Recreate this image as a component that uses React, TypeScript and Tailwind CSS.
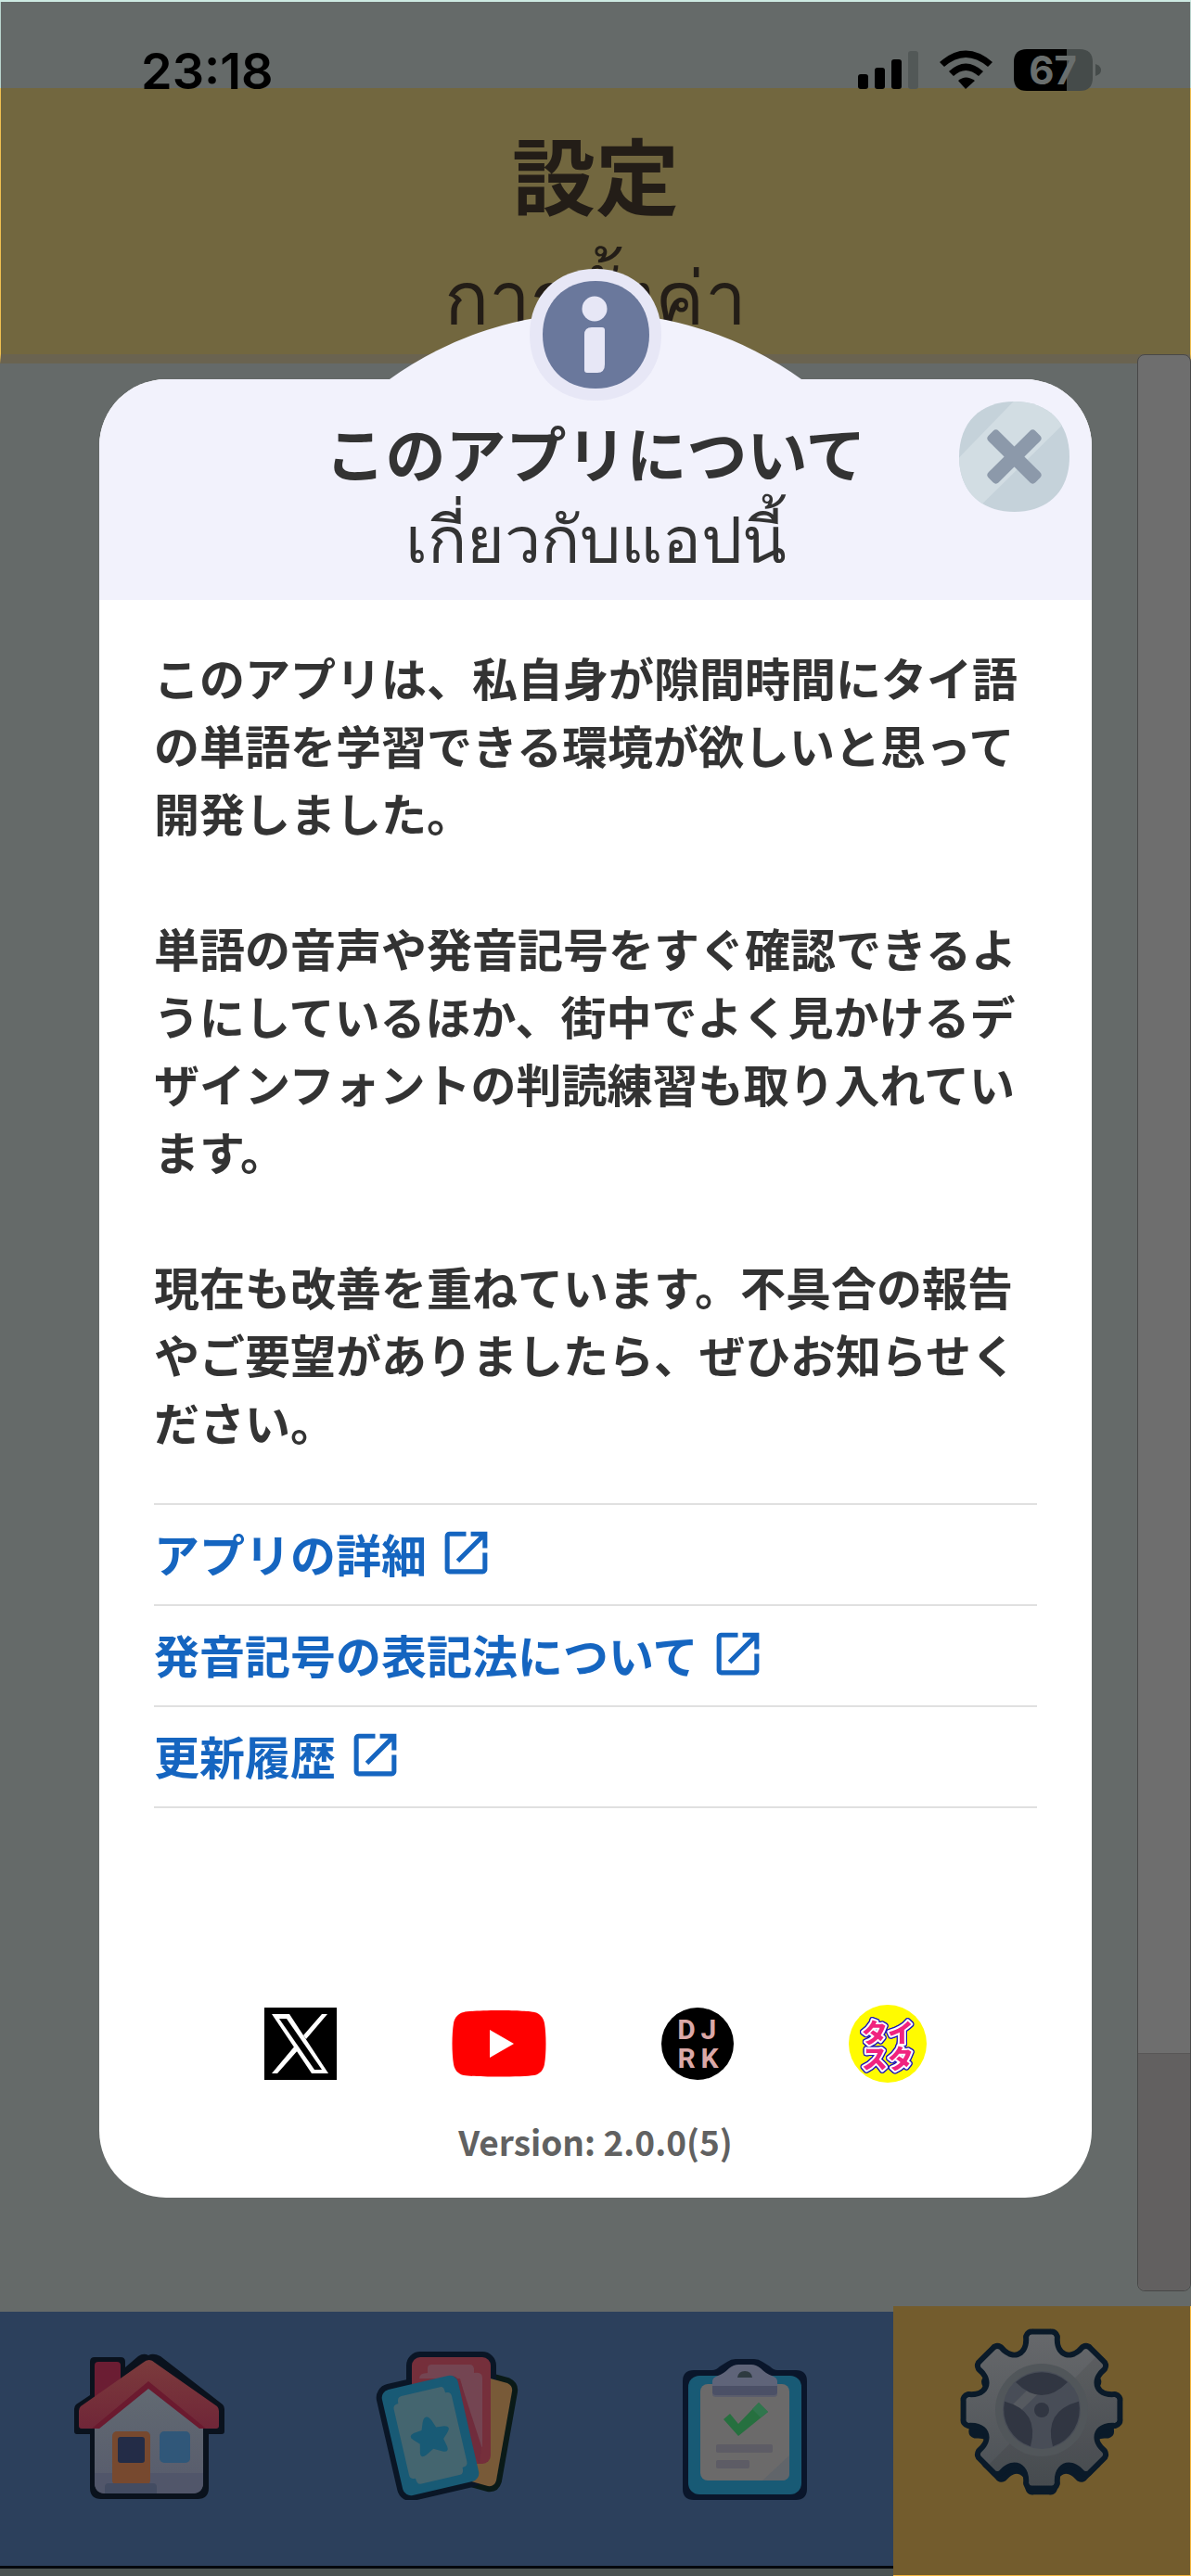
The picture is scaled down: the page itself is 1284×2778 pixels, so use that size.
import * as React from 'react';
import { MdOpenInNew } from 'react-icons/md';

const paragraphs = [
  'このアプリは、私自身が隙間時間にタイ語の単語を学習できる環境が欲しいと思って開発しました。',
  '単語の音声や発音記号をすぐ確認できるようにしているほか、街中でよく見かけるデザインフォントの判読練習も取り入れています。',
  '現在も改善を重ねています。不具合の報告やご要望がありましたら、ぜひお知らせください。',
];

const links = ['アプリの詳細', '発音記号の表記法について', '更新履歴'];

function StatusIcons() {
  return (
    <svg width="262" height="45" viewBox="0 0 262 45" aria-hidden="true" className="overflow-visible">
      <rect x="0" y="27" width="11" height="16" rx="3" />
      <rect x="18" y="20" width="11" height="23" rx="3" />
      <rect x="36" y="11" width="11" height="32" rx="3" />
      <rect x="54" y="2" width="11" height="41" rx="3" fill="#525857" />
      <path d="M88 14Q116 -11 145 14L140 19Q116 -1 93 19Z" />
      <path d="M98 24Q116 7 135 24L130 29Q116 17 103 29Z" />
      <path d="M108 34Q116 27 126 34L116 43Z" />
      <path d="M182 0H225V45H182Q168 45 168 31V14Q168 0 182 0Z" />
      <path d="M225 0H239Q253 0 253 14V31Q253 45 239 45H225Z" fill="#454b4a" />
      <path d="M256 16Q262 18 262 22.500T256 29Z" fill="#454b4a" />
      <text x="210" y="38" textAnchor="middle" fill="#696e6d" className="font-['Inter',sans-serif] text-[42px] font-bold">
        67
      </text>
    </svg>
  );
}

function InfoBadge() {
  return (
    <svg width="142" height="142" viewBox="0 0 142 142" aria-hidden="true">
      <path d="M71 0C113 0 142 29 142 71S113 142 71 142 0 113 0 71 29 0 71 0Z" fill="#e7e7f6" />
      <path d="M71 13C105 13 129 37 129 71S105 129 71 129 14 105 14 71 37 13 71 13Z" fill="#6a789c" />
      <circle cx="70" cy="43" r="13.500" fill="#e7e7f6" />
      <path d="M67 63H78Q81 63 81 66V103Q81 112 73 112H62Q59 112 59 109V71Q59 63 67 63Z" fill="#e7e7f6" />
    </svg>
  );
}

function CloseIcon() {
  return (
    <svg width="119" height="119" viewBox="0 0 120 120" aria-hidden="true">
      <clipPath id="close-shape">
        <path d="M60 0C97 0 120 23 120 60S97 120 60 120 0 97 0 60 23 0 60 0Z" />
      </clipPath>
      <g clipPath="url(#close-shape)">
        <path d="M0 0H120V120H0Z" fill="#c5d2da" />
        <path d="M61 -2L-2 63V138L120 18V-2Z" fill="#d2dde3" />
      </g>
      <path d="M60 49L77 32Q80 29 83 32L88 37Q91 40 88 43L71 60L88 77Q91 80 88 83L83 88Q80 91 77 88L60 71L43 88Q40 91 37 88L32 83Q29 80 32 77L49 60L32 43Q29 40 32 37L37 32Q40 29 43 32Z" fill="#8c99aa" />
    </svg>
  );
}

function XLogo() {
  return (
    <svg width="78" height="78" viewBox="0 0 78 78" aria-hidden="true">
      <path d="M0 0H78V78H0Z" />
      <path d="M8 7H27L69 71H51Z" fill="#fff" />
      <path d="M16 12H24L62 67H54Z" />
      <path d="M62 7H68L45 34L42 30ZM8 71H14L37 45L34 40Z" fill="#fff" />
    </svg>
  );
}

function YouTubeLogo() {
  return (
    <svg width="102" height="72" viewBox="0 0 102 72" aria-hidden="true">
      <path d="M51 0C70 0 86 1 89 2 95 3 99 8 100 14 102 26 102 46 100 58 99 64 95 69 89 70 76 72 26 72 13 70 7 69 3 64 2 58 0 46 0 26 2 14 3 8 7 3 13 2 16 1 32 0 51 0Z" fill="#f00" />
      <path d="M41 21L67 36L41 51Z" fill="#fff" />
    </svg>
  );
}

function DjrkLogo() {
  return (
    <svg width="78" height="78" viewBox="0 0 78 78" aria-hidden="true">
      <circle cx="39" cy="39" r="39" />
      <g fill="#dba8a7" textAnchor="middle" className="font-['Roboto',sans-serif] text-[30px] font-bold">
        <text x="27" y="34">D</text>
        <text x="51" y="34">J</text>
        <text x="27" y="65">R</text>
        <text x="52" y="65">K</text>
      </g>
    </svg>
  );
}

function TaistaLogo() {
  return (
    <svg width="84" height="84" viewBox="0 0 84 84" aria-hidden="true">
      <circle cx="42" cy="42" r="42" fill="#fffb00" />
      <g
        fill="#f0237f"
        stroke="#fff"
        strokeWidth="4"
        strokeLinejoin="round"
        textAnchor="middle"
        className="font-['Noto_Sans_CJK_JP',sans-serif] text-[28px] font-black [filter:drop-shadow(1px_0_0_#1a12b8)_drop-shadow(-1px_0_0_#1a12b8)_drop-shadow(0_1px_0_#1a12b8)_drop-shadow(0_-1px_0_#1a12b8)] [paint-order:stroke]"
      >
        <text x="42" y="41">タイ</text>
        <text x="42" y="69">スタ</text>
      </g>
    </svg>
  );
}

function HomeIcon() {
  return (
    <svg width="164" height="158" viewBox="0 0 164 158" aria-hidden="true">
      <defs>
        <linearGradient id="home-roof" x1="0" y1="0" x2="0" y2="1">
          <stop offset="0" stopColor="#7b3b3c" />
          <stop offset="1" stopColor="#702638" />
        </linearGradient>
        <linearGradient id="home-wall" x1="0" y1="0" x2="0" y2="1">
          <stop offset="0" stopColor="#626a72" />
          <stop offset="1" stopColor="#575b6c" />
        </linearGradient>
      </defs>
      <path d="M18 45V9Q18 4 23 4H51Q56 4 56 9V15L70 3Q76 -1 81 2Q86 -1 94 3L161 55Q163 57 163 60V84Q163 87 160 87H146V145Q146 157 134 157H30Q18 157 18 145V87H4Q1 87 1 84V60Q1 57 3 55Z" fill="#0a121d" />
      <path d="M23 60V13Q23 9 27 9H47Q51 9 51 13V60Z" fill="#6b1d33" />
      <path d="M23 78L81 34L140 78V139Q140 151 128 151H35Q23 151 23 139Z" fill="url(#home-wall)" />
      <path d="M23 129H140V139Q140 151 128 151H35Q23 151 23 139Z" fill="#51566a" />
      <path d="M75 10Q82 4 88 10L155 57Q157 59 157 62V78Q157 81 154 81H140L81 36L24 81H9Q6 81 6 78V62Q6 59 8 57Z" fill="url(#home-roof)" />
      <path d="M81 30L143 81H136L81 38L28 81H20Z" fill="#6b1a2f" />
      <rect x="42" y="84" width="41" height="58" rx="5" fill="#77492f" />
      <rect x="48" y="90" width="29" height="28" rx="3" fill="#232c47" />
      <rect x="93" y="84" width="33" height="34" rx="5" fill="#305779" />
      <path d="M34 151V144Q34 140 38 140H86Q90 140 90 144V151Z" fill="#434c62" />
    </svg>
  );
}

function CardsIcon() {
  return (
    <svg width="156" height="161" viewBox="0 0 156 161" aria-hidden="true">
      <g fill="#0a1626" stroke="#0a1626" strokeWidth="12" strokeLinejoin="round">
        <path d="M110 26L143 35Q149 38 148 44L131 140Q129 147 122 146L90 137Z" stroke="#0a1a18" />
        <rect x="40" y="7" width="85" height="115" rx="9" />
        <rect x="18" y="33" width="84" height="117" rx="9" transform="rotate(-13 60 91.500)" />
      </g>
      <path d="M110 26L143 35Q149 38 148 44L131 140Q129 147 122 146L90 137Z" fill="#785a38" />
      <rect x="40" y="7" width="85" height="115" rx="9" fill="#752f3b" />
      <path d="M61 15H103Q106 15 107 19V24Q116 23 116 29V104L110 100L92 30H48Q48 24 57 24V19Q57 15 61 15Z" fill="#744552" />
      <path d="M84 27Q90 29 93 35L115 103L113 122L100 100Z" fill="#702c3c" />
      <g transform="rotate(-13 60 91.500)">
        <rect x="18" y="33" width="84" height="117" rx="9" fill="#185a75" />
        <path d="M39 43H83Q86 43 86 50Q92 50 92 55V128Q92 133 86 133Q86 140 82 140H38Q34 140 34 133Q28 133 28 128V55Q28 50 34 50Q34 43 39 43Z" fill="#44656f" />
        <path d="M60 71Q63 71 65 76L68 84L77 85Q84 87 79 92L73 98L75 107Q76 114 69 111L60 106L51 111Q44 114 45 107L47 98L41 92Q36 87 43 85L52 84L55 76Q57 71 60 71Z" fill="#185a75" />
      </g>
    </svg>
  );
}

function ChecklistIcon() {
  return (
    <svg width="134" height="152" viewBox="0 0 134 152" aria-hidden="true">
      <path d="M12 12H32Q36 12 40 8L48 3Q52 0 57 0H77Q82 0 86 3L94 8Q98 12 102 12H122Q134 12 134 24V140Q134 152 122 152H12Q0 152 0 140V24Q0 12 12 12Z" fill="#0a162b" />
      <rect x="6" y="18" width="122" height="128" rx="12" fill="#185a75" />
      <rect x="19" y="27" width="96" height="104" rx="8" fill="#6b6a6a" />
      <path d="M115 104V123Q115 131 107 131H86Z" fill="#61656a" />
      <path d="M32 28H102V38Q102 41 98 41H36Q32 41 32 38Z" fill="#5b5d6c" />
      <path d="M32 36V24Q32 20 38 18Q44 16 50 10Q55 6 60 6H74Q79 6 84 10Q90 16 96 18Q102 20 102 24V36Z" fill="#5f6479" />
      <path d="M32 29H102V35Q102 39 98 39H36Q32 39 32 35Z" fill="#4b5066" />
      <path d="M59 20Q60 13 67 13T75 20Z" fill="#2e3a40" />
      <path d="M44 65L51 59L60 70L82 47L92 57L60 83Z" fill="#26703f" />
      <path d="M75 54L82 47L92 57L84 63Z" fill="#30764d" />
      <rect x="36" y="92" width="61" height="9" rx="2" fill="#5d5c65" />
      <rect x="36" y="109" width="36" height="9" rx="2" fill="#5d5c65" />
    </svg>
  );
}

function polar(radius: number, degrees: number) {
  const a = (degrees * Math.PI) / 180;
  return `${(123 + radius * Math.sin(a)).toFixed(1)} ${(109 - radius * Math.cos(a)).toFixed(1)}`;
}

const gearPath =
  [0, 45, 90, 135, 180, 225, 270, 315]
    .map(
      (a, i) =>
        `${i === 0 ? 'M' : 'L'}${polar(80, a - 10)}Q${polar(83, a - 9)} ${polar(82, a - 7)}L${polar(82, a + 7)}Q${polar(83, a + 9)} ${polar(80, a + 10)}C${polar(58, a + 12)} ${polar(58, a + 33)} ${polar(80, a + 35)}`,
    )
    .join('') + 'Z';

function GearIcon() {
  return (
    <svg width="178" height="184" viewBox="34 20 178 184" aria-hidden="true">
      <defs>
        <linearGradient id="gear-face" x1="0" y1="0" x2="0" y2="1">
          <stop offset="0" stopColor="#66686b" />
          <stop offset="1" stopColor="#4c5156" />
        </linearGradient>
        <clipPath id="gear-clip">
          <path d={gearPath} />
        </clipPath>
      </defs>
      <path d={gearPath} fill="#3f4852" stroke="#0a1a29" strokeWidth="11" strokeLinejoin="round" transform="translate(12 24) scale(.9)" />
      <path d={gearPath} fill="url(#gear-face)" stroke="#0a1a29" strokeWidth="12" strokeLinejoin="round" />
      <path d={gearPath} fill="url(#gear-face)" />
      <g clipPath="url(#gear-clip)">
        <path d="M183 50L60 174L90 220H230V50Z" fill="#000" opacity=".07" />
      </g>
      <circle cx="123" cy="109" r="50" fill="#51565a" />
      <circle cx="123" cy="109" r="42" fill="#484d57" />
      <path d="M91 104L122 73L131 80L98 112Z" fill="#565a60" />
      <g fill="#313642">
        <path d="M95 79A42 42 0 0 1 151 79Q123 107 95 79Z" />
        <path d="M95 79A42 42 0 0 1 151 79Q123 107 95 79Z" transform="rotate(120 123 109)" />
        <path d="M95 79A42 42 0 0 1 151 79Q123 107 95 79Z" transform="rotate(240 123 109)" />
        <circle cx="123" cy="109" r="8" />
      </g>
    </svg>
  );
}

const tabs = [
  { label: 'ホーム', icon: <HomeIcon /> },
  { label: '単語カード', icon: <CardsIcon /> },
  { label: 'テスト', icon: <ChecklistIcon /> },
];

const socials = [
  { label: 'X', icon: <XLogo /> },
  { label: 'YouTube', icon: <YouTubeLogo /> },
  { label: 'DJRK', icon: <DjrkLogo /> },
  { label: 'タイスタ', icon: <TaistaLogo /> },
];

function SettingsScreen() {
  return (
    <div className="flex min-h-screen flex-col border-t-2 border-[#cdeae2] bg-[#656a69]">
      <div className="relative z-10 flex h-[93px] items-start justify-between border-x border-[#b9d4cd] pt-[51px] pr-24 pl-[151px]">
        <span className="font-['Inter',sans-serif] text-[54px] leading-[48px] font-semibold text-black">23:18</span>
        <StatusIcons />
      </div>
      <header className="h-[297px] border-x border-b-[10px] border-x-[#f0bf50] border-b-[#6a6350] bg-[#72673f] pt-7 text-center text-[#231d17]">
        <h1 className="text-[90px] leading-[126px] font-bold">設定</h1>
        <p className="text-[80px] leading-[132px]">การตั้งค่า</p>
      </header>
      <main className="flex flex-1 justify-end">
        <div className="-mt-[10px] mb-4 flex w-[58px] flex-col justify-end rounded-lg border border-[#484848] bg-[#6e6e6e]">
          <div className="h-64 rounded-b-lg border-t border-[#585656] bg-[#626060]" />
        </div>
      </main>
      <nav className="grid grid-cols-4">
        {tabs.map((tab) => (
          <a
            key={tab.label}
            href="#"
            aria-label={tab.label}
            className="mt-[6px] mb-2 flex h-[277px] items-end justify-center border-b-[3px] border-[#06090d] bg-[#2c405c] pb-[71px] shadow-[0_8px_0_#4b5251]"
          >
            {tab.icon}
          </a>
        ))}
        <a
          href="#"
          aria-label="設定"
          aria-current="page"
          className="flex items-end justify-center border-r border-b border-[#f5b73f] bg-[#735c2d] pb-[83px]"
        >
          <GearIcon />
        </a>
      </nav>
    </div>
  );
}

function AboutDialog() {
  return (
    <div className="absolute inset-0 z-20 flex items-center justify-center">
      <section
        role="dialog"
        aria-modal="true"
        aria-labelledby="about-title"
        className="relative w-5/6 rounded-[72px] bg-white text-[#333333]"
      >
        <svg
          width="444"
          height="73"
          viewBox="0 0 444 73"
          aria-hidden="true"
          className="absolute bottom-full left-1/2 -mb-px -translate-x-1/2"
        >
          <path d="M0 72A380 380 0 0 1 444 72V73H0Z" fill="#f2f2fc" />
        </svg>
        <header className="h-[238px] rounded-t-[72px] bg-[#f2f2fc] pt-[38px] text-center">
          <h2 id="about-title" className="text-[65px] leading-[80px] font-bold">
            このアプリについて
          </h2>
          <p className="text-[70px] leading-[100px] font-medium">เกี่ยวกับแอปนี้</p>
        </header>
        <div className="absolute -top-[119px] left-1/2 -translate-x-1/2">
          <InfoBadge />
        </div>
        <button type="button" aria-label="閉じる" className="absolute top-6 right-6">
          <CloseIcon />
        </button>

        <div className="px-[59px] pt-[46px] pb-9">
          <div className="flex flex-col gap-[73px] text-[49px] leading-[73px] font-bold">
            {paragraphs.map((text) => (
              <p key={text}>{text}</p>
            ))}
          </div>

          <ul className="mt-[52px] border-t-2 border-[#e0e0e0]">
            {links.map((text) => (
              <li key={text} className="border-b-2 border-[#e0e0e0]">
                <a
                  href="#"
                  className="flex h-[107px] items-center gap-3 pb-1 text-[49px] leading-[73px] font-bold text-[#1565c0]"
                >
                  {text}
                  <MdOpenInNew size={61} aria-hidden="true" />
                </a>
              </li>
            ))}
          </ul>

          <div className="mt-[212px] flex items-center justify-center gap-[124px]">
            {socials.map((item) => (
              <a key={item.label} href="#" aria-label={item.label}>
                {item.icon}
              </a>
            ))}
          </div>
          <p className="mt-[38px] text-center text-[37px] leading-[50px] font-bold text-[#616161]">
            Version: 2.0.0(5)
          </p>
        </div>
      </section>
    </div>
  );
}

export default function App() {
  return (
    <div lang="ja" className="relative min-h-screen font-['Noto_Sans_CJK_JP','Noto_Sans',sans-serif]">
      <SettingsScreen />
      <AboutDialog />
    </div>
  );
}
